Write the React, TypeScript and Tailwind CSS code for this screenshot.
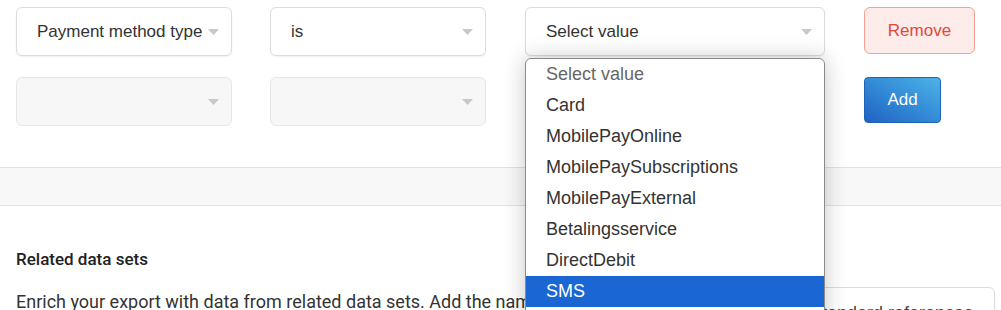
// @ts-nocheck
const options = [
  'Select value',
  'Card',
  'MobilePayOnline',
  'MobilePaySubscriptions',
  'MobilePayExternal',
  'Betalingsservice',
  'DirectDebit',
  'SMS',
  'Invoice',
];

function Caret() {
  return (
    <svg width="11" height="6" viewBox="0 0 11 6" className="shrink-0">
      <path d="M0 0 L11 0 L5.5 6 Z" fill="#c8c8c8" />
    </svg>
  );
}

function FakeSelect({ value, width, disabled, open }: { value?: string; width: string; disabled?: boolean; open?: boolean }) {
  return (
    <div className={`relative ${width} shrink-0`}>
      <div
        className={`h-[49px] flex items-center pl-5 pr-3 rounded-md border ${
          disabled ? 'bg-[#f7f7f7] border-[#e6e6e6]' : 'bg-white border-[#dcdcdc] shadow-[0_1px_2px_rgba(0,0,0,0.06)]'
        }`}
      >
        <span className="flex-1 min-w-0 overflow-hidden whitespace-nowrap text-[17px] text-[#333]">{value}</span>
        <Caret />
      </div>
      {open && (
        <div className="absolute left-0 top-[51px] w-full z-20 bg-white border border-[#8a8a8a] rounded-t-[6px] shadow-[0_0_22px_rgba(0,0,0,0.22)] overflow-hidden">
          {options.map((o, i) => (
            <div
              key={o}
              className={`h-[31px] flex items-center pl-5 text-[18px] ${
                o === 'SMS' ? 'bg-[#1a66d2] text-white' : i === 0 ? 'text-[#666]' : 'text-[#333]'
              }`}
            >
              {o}
            </div>
          ))}
        </div>
      )}
    </div>
  );
}

export default function App() {
  return (
    <div className="w-[1001px] h-[310px] overflow-hidden bg-white font-['Liberation_Sans',Arial,sans-serif]">
      <div className="pl-4 pt-[7px] pb-[41px] flex flex-col gap-[21px]">
        <div className="flex items-start">
          <FakeSelect value="Payment method type" width="w-[216px]" />
          <div className="ml-[38px]">
            <FakeSelect value="is" width="w-[216px]" />
          </div>
          <div className="ml-[39px]">
            <FakeSelect value="Select value" width="w-[300px]" open />
          </div>
          <button className="ml-[39px] w-[111px] h-[47px] rounded-md border border-[#f4a192] bg-[#fdecea] text-[17px] text-[#e5463a]">
            Remove
          </button>
        </div>
        <div className="flex items-start">
          <FakeSelect width="w-[216px]" disabled />
          <div className="ml-[38px]">
            <FakeSelect width="w-[216px]" disabled />
          </div>
          <div className="ml-[39px]">
            <FakeSelect width="w-[300px]" disabled />
          </div>
          <button className="ml-[39px] w-[77px] h-[46px] rounded-[4px] border border-[#1f63b8] bg-gradient-to-tr from-[#2062c4] to-[#4db3e6] text-[17px] text-white">
            Add
          </button>
        </div>
      </div>

      <div className="h-[39px] border-y border-[#e2e2e2] bg-[#f8f8f8]" />

      <div className="px-4 pt-[42px] font-['Roboto',sans-serif] text-[#222]">
        <h3 className="text-[17px] font-medium leading-[22px]">Related data sets</h3>
        <div className="mt-[20px] flex items-start">
          <p className="flex-1 min-w-0 whitespace-nowrap overflow-hidden text-[18px] leading-[24px] text-[#333]">
            Enrich your export with data from related data sets. Add the name of the data set below and select
          </p>
          <div className="ml-3 mr-[-10px] mt-[-3px] w-[200px] h-[46px] rounded-md border border-[#d8dde3] flex items-start pt-[12px] pl-[14px] text-[18px] text-[#444] font-['Liberation_Sans',Arial,sans-serif] whitespace-nowrap overflow-hidden">
            Standard references
          </div>
        </div>
      </div>
    </div>
  );
}
